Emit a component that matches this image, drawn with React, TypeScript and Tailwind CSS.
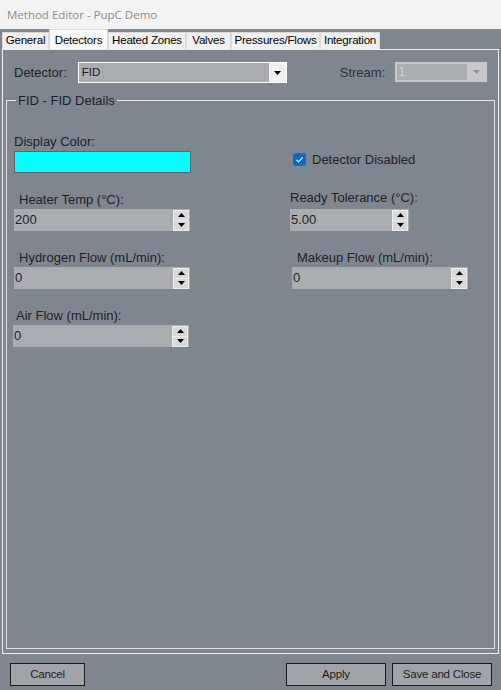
import React from 'react';

function Arrow({ up = false, color = '#000000' }: { up?: boolean; color?: string }) {
  return (
    <svg width="7" height="4" viewBox="0 0 7 4" className="block">
      <path d={up ? 'M0 4 L3.5 0 L7 4 Z' : 'M0 0 L7 0 L3.5 4 Z'} fill={color} />
    </svg>
  );
}

function Spinner() {
  return (
    <div className="flex flex-col w-[16px] h-[21px] border border-[#ededed] bg-[#ededed] gap-px mr-px">
      <div className="flex-1 bg-[#d9d9d9] flex items-center justify-center">
        <Arrow up />
      </div>
      <div className="flex-1 bg-[#d9d9d9] flex items-center justify-center">
        <Arrow />
      </div>
    </div>
  );
}

function NumField({ value, width }: { value: string; width: string }) {
  return (
    <div className={`${width} h-[22px] bg-[#a9acb0] flex items-center justify-between`}>
      <span className="pl-px text-[13px] text-[#1e1e1e]">{value}</span>
      <Spinner />
    </div>
  );
}

export default function App() {
  const tabs = [
    { label: 'General', w: 'w-[47px]' },
    { label: 'Detectors', w: 'w-[59px]' },
    { label: 'Heated Zones', w: 'w-[78px]' },
    { label: 'Valves', w: 'w-[45px]' },
    { label: 'Pressures/Flows', w: 'w-[89px]' },
    { label: 'Integration', w: 'w-[60px]' },
  ];

  return (
    <div className="w-[501px] h-[690px] bg-[#80868f] flex flex-col font-['Liberation_Sans',Arial,sans-serif] text-[#1e2226] overflow-hidden">
      {/* title bar */}
      <div className="h-[29px] bg-[#f3f3f3] flex items-center pl-[7px] text-[11.5px] text-[#8c8c8c] font-['Open_Sans',sans-serif]">
        Method Editor - PupC Demo
      </div>

      {/* tabs */}
      <div className="h-[20px] flex items-end pl-[2px]">
        {tabs.map((t) =>
          t.label === 'Detectors' ? (
            <div
              key={t.label}
              className={`${t.w} h-[20px] bg-[#f9f9f9] border border-b-0 border-[#d9d9d9] flex items-start justify-center pt-[2px] text-[11.5px] tracking-[-0.2px] text-black`}
            >
              {t.label}
            </div>
          ) : (
            <div
              key={t.label}
              className={`${t.w} h-[17px] bg-[#f0f0f0] border border-b-0 border-[#d9d9d9] flex items-center justify-center text-[11.5px] tracking-[-0.2px] text-black`}
            >
              {t.label}
            </div>
          )
        )}
      </div>

      {/* tab panel */}
      <div className="ml-[2px] w-[497px] h-[605px] border border-[#eeeeee] px-[3px] pb-[4px] flex flex-col">
        <div className="mt-[12px] h-[21px] flex items-center">
          <span className="ml-[8px] text-[13px] leading-[15px]">Detector:</span>
          <div className="ml-[11px] w-[209px] h-[21px] border border-white bg-[#a9acb0] flex">
            <span className="flex-1 pl-[3px] text-[11.5px] leading-[19px] text-[#1e1e1e]">FID</span>
            <div className="w-[17px] bg-[#f0f0f0] flex items-center justify-center">
              <Arrow />
            </div>
          </div>
          <span className="ml-[53px] text-[13px] leading-[15px] text-[#2e3338]">Stream:</span>
          <div className="ml-[10px] -mt-[2px] w-[92px] h-[20px] bg-[#c6c8cb] p-[2px] flex">
            <span className="w-[70px] bg-[#a9acb0] pl-px text-[13px] leading-[16px] text-[#cfd1d3]">1</span>
            <div className="flex-1 flex items-center justify-center">
              <Arrow color="#8f9297" />
            </div>
          </div>
        </div>

        {/* group box */}
        <fieldset className="mt-[10px] flex-1 border border-[#e4e4e4] pl-[7px]">
          <legend className="ml-[2px] px-[2px] text-[13px] leading-[15px]">FID - FID Details</legend>

          <div className="mt-[26px] flex">
            <div className="w-[177px] flex flex-col">
              <span className="text-[13px] leading-[15px]">Display Color:</span>
              <div className="mt-[2px] h-[22px] bg-[#00ffff] border border-[#5c666e]" />
            </div>
            <div className="ml-[102px] mt-[18px] h-[15px] flex items-center">
              <div className="w-[13px] h-[13px] rounded-[3px] bg-[#0f6cbd] flex items-center justify-center">
                <svg width="9" height="9" viewBox="0 0 9 9">
                  <path d="M1.5 4.8 L3.6 6.8 L7.6 2.4" stroke="#ffffff" strokeWidth="1.1" fill="none" />
                </svg>
              </div>
              <span className="ml-[6px] text-[13px] leading-[15px]">Detector Disabled</span>
            </div>
          </div>

          <div className="mt-[17px] flex">
            <div className="w-[176px] flex flex-col">
              <span className="mt-[2px] pl-[5px] text-[13px] leading-[15px]">Heater Temp (°C):</span>
              <div className="mt-[2px]">
                <NumField value="200" width="w-[176px]" />
              </div>
            </div>
            <div className="ml-[100px] flex flex-col">
              <span className="text-[13px] leading-[15px]">Ready Tolerance (°C):</span>
              <div className="mt-[4px]">
                <NumField value="5.00" width="w-[119px]" />
              </div>
            </div>
          </div>

          <div className="mt-[19px] flex">
            <div className="w-[176px] flex flex-col">
              <span className="pl-[5px] text-[13px] leading-[15px]">Hydrogen Flow (mL/min):</span>
              <div className="mt-[2px]">
                <NumField value="0" width="w-[176px]" />
              </div>
            </div>
            <div className="ml-[102px] flex flex-col">
              <span className="pl-[5px] text-[13px] leading-[15px]">Makeup Flow (mL/min):</span>
              <div className="mt-[2px]">
                <NumField value="0" width="w-[176px]" />
              </div>
            </div>
          </div>

          <div className="mt-[19px] -ml-px flex flex-col">
            <span className="pl-[3px] text-[13px] leading-[15px]">Air Flow (mL/min):</span>
            <div className="mt-[2px]">
              <NumField value="0" width="w-[176px]" />
            </div>
          </div>
        </fieldset>
      </div>

      {/* buttons */}
      <div className="pt-[9px] flex text-[11.5px] tracking-[-0.2px] text-[#1e1e1e]">
        <button className="ml-[10px] w-[75px] h-[23px] bg-[#a0a4a9] border border-[#1a1a1a]">Cancel</button>
        <button className="ml-auto w-[100px] h-[23px] bg-[#a0a4a9] border border-[#1a1a1a]">Apply</button>
        <button className="ml-[6px] mr-[9px] w-[100px] h-[23px] bg-[#a0a4a9] border border-[#1a1a1a]">Save and Close</button>
      </div>
    </div>
  );
}
